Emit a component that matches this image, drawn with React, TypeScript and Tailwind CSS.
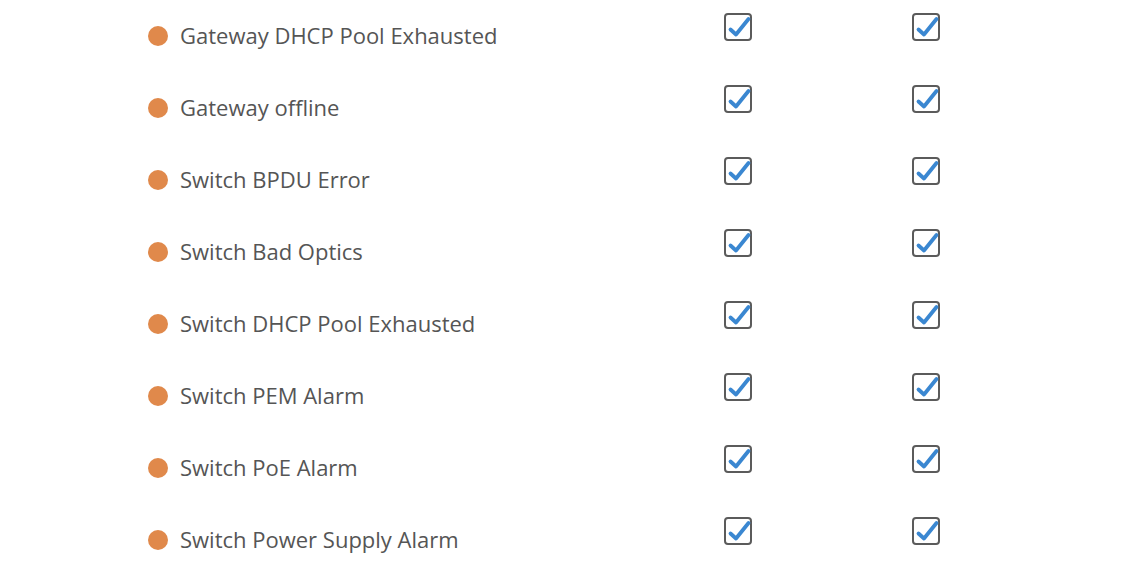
const alerts = [
    'Gateway DHCP Pool Exhausted',
    'Gateway offline',
    'Switch BPDU Error',
    'Switch Bad Optics',
    'Switch DHCP Pool Exhausted',
    'Switch PEM Alarm',
    'Switch PoE Alarm',
    'Switch Power Supply Alarm',
]

function CheckBox() {
    return (
        <svg width="28" height="28" viewBox="0 0 28 28" className="mb-[18px] flex-none">
            <rect x="1" y="1" width="26" height="26" rx="3" fill="white" stroke="#5b5b5b" strokeWidth="2" />
            <path d="M6.5 16.5 L12 21.5 L24.5 6" fill="none" stroke="#3a87d1" strokeWidth="3.8" strokeLinecap="round" strokeLinejoin="round" />
        </svg>
    )
}

export default function App() {
    return (
        <div className="h-[573px] w-[1134px] overflow-hidden bg-white font-['Open_Sans',sans-serif]">
            {alerts.map((name) => (
                <div key={name} className="flex h-[72px] items-center pl-[148px]">
                    <div className="flex w-[576px] items-center gap-3">
                        <span className="size-5 flex-none rounded-full bg-[#e0894b]" />
                        <span className="mb-[2px] text-[22px] leading-none text-[#555555]">{name}</span>
                    </div>
                    <CheckBox />
                    <div className="w-[160px]" />
                    <CheckBox />
                </div>
            ))}
        </div>
    )
}
